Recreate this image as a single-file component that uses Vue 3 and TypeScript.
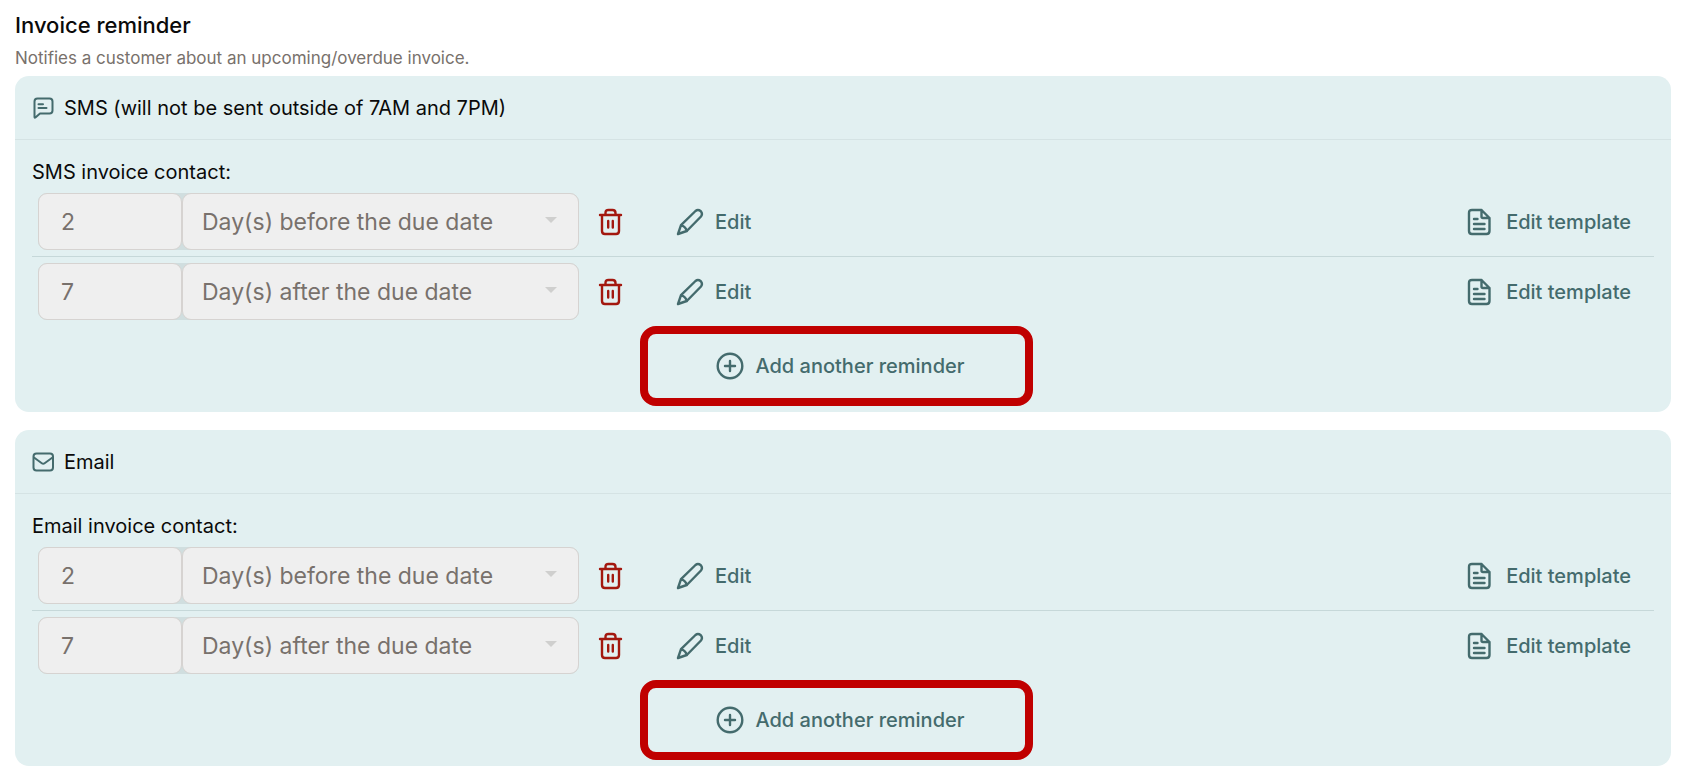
<script setup lang="ts">
interface Reminder {
  id: string
  amount: number
  timing: string
}

interface Channel {
  key: 'sms' | 'email'
  title: string
  label: string
  reminders: Reminder[]
}

const timings: string[] = ['Day(s) before the due date', 'Day(s) after the due date']

const channels: Channel[] = [
  {
    key: 'sms',
    title: 'SMS (will not be sent outside of 7AM and 7PM)',
    label: 'SMS invoice contact:',
    reminders: [
      { id: 'sms-1', amount: 2, timing: timings[0] },
      { id: 'sms-2', amount: 7, timing: timings[1] },
    ],
  },
  {
    key: 'email',
    title: 'Email',
    label: 'Email invoice contact:',
    reminders: [
      { id: 'email-1', amount: 2, timing: timings[0] },
      { id: 'email-2', amount: 7, timing: timings[1] },
    ],
  },
]
</script>

<template>
  <main class="page">
    <header class="intro">
      <h1>Invoice reminder</h1>
      <p>Notifies a customer about an upcoming/overdue invoice.</p>
    </header>

    <section v-for="channel in channels" :key="channel.key" class="card">
      <div class="card-head">
        <svg v-if="channel.key === 'sms'" class="icon-small" viewBox="0 0 22 22" aria-hidden="true">
          <path d="M2.500 20V4.500Q2.500 1.500 5.500 1.500H17.500Q20.500 1.500 20.500 4.500V13.500Q20.500 16.500 17.500 16.500H8L3.700 20.300Q2.500 21.200 2.500 20Z" />
          <path d="M6.500 7.200H11M6.500 11H14.500" />
        </svg>
        <svg v-else class="icon-small" viewBox="0 0 22 22" aria-hidden="true">
          <rect x="1.500" y="2.500" width="19.500" height="17" rx="3" />
          <path d="M2 6.500L9.800 12.200Q11.200 13.300 12.600 12.200L20.500 6.500" />
        </svg>
        <h2>{{ channel.title }}</h2>
      </div>

      <div class="card-body">
        <h3>{{ channel.label }}</h3>
        <ul>
          <li v-for="reminder in channel.reminders" :key="reminder.id">
            <div class="fields">
              <input
                :id="reminder.id"
                type="text"
                class="amount"
                :value="reminder.amount"
                aria-label="Number of days"
                disabled
              />
              <div class="select-wrap">
                <select :value="reminder.timing" aria-label="Reminder timing" disabled>
                  <option v-for="timing in timings" :key="timing" :value="timing">{{ timing }}</option>
                </select>
                <svg class="caret" viewBox="0 0 12 6" aria-hidden="true"><path d="M0 0H12L6 6Z" /></svg>
              </div>
            </div>
            <button type="button" class="delete" aria-label="Delete reminder">
              <svg class="icon" viewBox="0 0 28 28" aria-hidden="true">
                <path d="M3 7H24M5 7V23Q5 26 8 26H19Q22 26 22 23V7M8.500 7V5Q8.500 2 11.500 2H15.500Q18.500 2 18.500 5V7M11.200 13V19.500M15.800 13V19.500" />
              </svg>
            </button>
            <button type="button" class="action">
              <svg class="icon" viewBox="0 0 28 28" aria-hidden="true">
                <path d="M2 26L5 17.200L19.500 3Q22 1 24.800 3.200Q27 6 25 8.500L10.800 23L2 26ZM5 17.200Q9.500 18.500 10.800 23" />
              </svg>
              Edit
            </button>
            <button type="button" class="action template">
              <svg class="icon" viewBox="0 0 28 28" aria-hidden="true">
                <path d="M7 2H16.500L24.500 10V23Q24.500 26 21.500 26H7Q4 26 4 23V5Q4 2 7 2ZM16.500 2V8.500Q16.500 10 18 10H24.500M9 11H12.500M9 16H19.500M9 21H19.500" />
              </svg>
              Edit template
            </button>
          </li>
        </ul>
        <button type="button" class="action add">
          <svg class="icon" viewBox="0 0 28 28" aria-hidden="true">
            <circle cx="14" cy="14" r="12.300" />
            <path d="M14 9V19M9 14H19" />
          </svg>
          Add another reminder
        </button>
      </div>
    </section>
  </main>
</template>

<style>
body {
  margin: 0;
  background: #fff;
}
</style>

<style scoped>
* {
  box-sizing: border-box;
}

.page {
  padding: 10px 16px 16px 15px;
  font-family: Inter, "Liberation Sans", sans-serif;
  color: #0a0a0a;
}

h1,
h2,
h3,
p,
ul {
  margin: 0;
  padding: 0;
}

h1 {
  font-size: 22px;
  line-height: 30px;
  font-weight: 500;
}

.intro p {
  padding: 6px 0;
  font-size: 17px;
  line-height: 24px;
  color: #78716c;
}

.card {
  border-radius: 14px;
  background: #e2f0f1;
}

.card + .card {
  margin-top: 18px;
}

.card-head {
  display: flex;
  align-items: center;
  gap: 10px;
  height: 64px;
  padding: 0 17px;
  border-bottom: 1px solid #d5e3e4;
}

h2,
h3 {
  font-size: 20px;
  line-height: 28px;
  font-weight: 400;
}

.card-body {
  padding: 18px 17px 6px;
}

ul {
  margin-top: 1px;
  list-style: none;
}

li {
  display: flex;
  align-items: center;
  padding: 6px;
}

li + li {
  border-top: 1px solid #c6d8d9;
}

.fields {
  display: flex;
  width: 541px;
  height: 57px;
  border-radius: 9px;
  background: #d0dedf;
}

input,
select {
  height: 57px;
  margin: 0;
  border: 1px solid #d6d3d1;
  border-radius: 9px;
  background: #efefef;
  color: #78716c;
  font: 400 23px/28px Inter, "Liberation Sans", sans-serif;
  opacity: 1;
}

.amount {
  width: 144px;
  padding: 0 22px;
}

.select-wrap {
  position: relative;
  flex: 1;
}

select {
  width: 100%;
  padding: 0 19px;
  appearance: none;
}

.caret {
  position: absolute;
  top: 24px;
  right: 22px;
  width: 12px;
  height: 6px;
  fill: #cfcfce;
  pointer-events: none;
}

button {
  display: flex;
  align-items: center;
  margin: 0;
  padding: 0;
  border: 0;
  background: none;
  color: #446b6d;
  font: 500 20px/28px Inter, "Liberation Sans", sans-serif;
  cursor: pointer;
}

.icon,
.icon-small {
  flex: none;
  fill: none;
  stroke: currentColor;
  stroke-width: 2;
  stroke-linecap: round;
  stroke-linejoin: round;
}

.icon {
  width: 28px;
  height: 28px;
  stroke-width: 2.4;
}

.icon-small {
  width: 22px;
  height: 22px;
  color: #446b6d;
}

.delete {
  margin: 0 51px 0 18px;
  color: #a3180f;
}

.action {
  gap: 11px;
}

.template {
  gap: 13px;
  margin: 0 17px 0 auto;
}

.add {
  position: relative;
  height: 80px;
  margin: 0 auto;
  padding-right: 5px;
}

.add::after {
  content: "";
  position: absolute;
  top: 0;
  bottom: 0;
  left: -76px;
  right: -63px;
  border: 8px solid #c00000;
  border-radius: 16px;
  pointer-events: none;
}
</style>
